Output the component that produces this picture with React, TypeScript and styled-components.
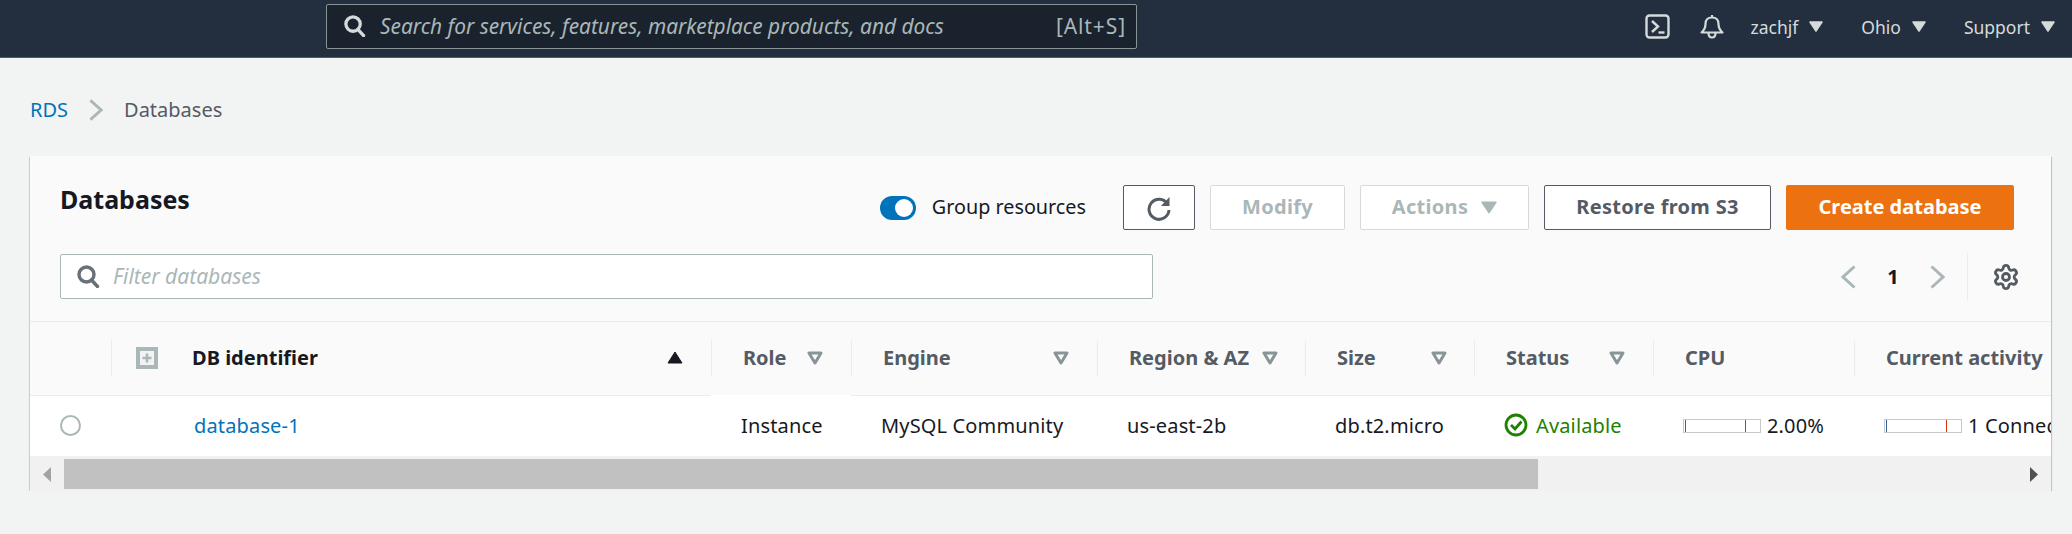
import styled, { createGlobalStyle } from "styled-components";
import { Settings } from "lucide-react";

const FONT = `"Noto Sans", "Open Sans", sans-serif`;
const COLUMNS = "81px 600px 140px 246px 208px 169px 179px 201px 400px";

const GlobalStyle = createGlobalStyle`
  html, body {
    margin: 0;
    background: #f2f3f3;
    font-family: ${FONT};
    overflow: hidden;
  }
`;

const Caret = ({ size = 14, color = "#d5dbdb" }: { size?: number; color?: string }) => (
  <svg width={size} height={size * 0.8} viewBox="0 0 14 11">
    <path d="M1 1 H13 L7 10 Z" fill={color} stroke={color} strokeWidth="1.5" strokeLinejoin="round" />
  </svg>
);

const FilterCaret = () => (
  <svg width="16" height="14" viewBox="0 0 16 14">
    <path d="M2 2 H14 L8 12 Z" fill="none" stroke="#879596" strokeWidth="3" strokeLinejoin="round" />
  </svg>
);

const SearchIcon = ({ color, size = 24 }: { color: string; size?: number }) => (
  <svg width={size} height={size} viewBox="0 0 24 24" fill="none" stroke={color} strokeWidth="3.4">
    <circle cx="10.5" cy="10.5" r="7.5" />
    <path d="M15.5 16 L21.5 22.5" strokeLinecap="round" />
  </svg>
);

const Chevron = ({ dir, color, w = 15, h = 24 }: { dir: "left" | "right"; color: string; w?: number; h?: number }) => (
  <svg width={w} height={h} viewBox="0 0 15 24" fill="none" stroke={color} strokeWidth="3" preserveAspectRatio="none">
    <path d={dir === "left" ? "M13.5 1.5 L2 12 L13.5 22.5" : "M1.5 1.5 L13 12 L1.5 22.5"} />
  </svg>
);

const columns = [
  { label: "Role", filter: true, width: 64 },
  { label: "Engine", filter: true, width: 170 },
  { label: "Region & AZ", filter: true, width: 133 },
  { label: "Size", filter: true, width: 94 },
  { label: "Status", filter: true, width: 103 },
  { label: "CPU", filter: false, width: 0 },
  { label: "Current activity", filter: false, width: 0 },
];

const App = () => {
  return (
    <>
      <GlobalStyle />
      <TopNav>
        <GlobalSearch>
          <SearchIcon color="#d5dbdb" size={23} />
          <SearchPlaceholder>Search for services, features, marketplace products, and docs</SearchPlaceholder>
          <Shortcut>[Alt+S]</Shortcut>
        </GlobalSearch>
        <NavRight>
          <svg width="25" height="25" viewBox="0 0 25 25" fill="none" stroke="#d5dbdb" strokeWidth="2.4">
            <rect x="1.5" y="1.5" width="22" height="22" rx="3" />
            <path d="M7 7 L13 12.5 L7 18" />
            <path d="M13.5 18.5 H19.5" />
          </svg>
          <BellWrap>
            <svg width="24" height="25" viewBox="0 0 24 25" fill="none" stroke="#d5dbdb" strokeWidth="2.2" strokeLinejoin="round">
              <path d="M12 1 V3.5" />
              <path d="M1.5 18.5 C5 15.5 5.5 13 5.5 10 C5.5 6 8 3.5 12 3.5 C16 3.5 18.5 6 18.5 10 C18.5 13 19 15.5 22.5 18.5 Z" />
              <path d="M8.5 19 C8.5 25 15.5 25 15.5 19" />
            </svg>
          </BellWrap>
          <NavMenu $left={27}>
            zachjf <Caret />
          </NavMenu>
          <NavMenu $left={38}>
            Ohio <Caret />
          </NavMenu>
          <NavMenu $left={38}>
            Support <Caret />
          </NavMenu>
        </NavRight>
      </TopNav>

      <Breadcrumbs>
        <CrumbLink>RDS</CrumbLink>
        <Chevron dir="right" color="#aab7b8" w={14} h={22} />
        <CrumbCurrent>Databases</CrumbCurrent>
      </Breadcrumbs>

      <Card>
        <CardHeader>
          <HeaderRow>
            <Title>Databases</Title>
            <Toolbar>
              <Toggle />
              <ToggleLabel>Group resources</ToggleLabel>
              <Button $width={72} $kind="normal" $icon>
                <svg width="26" height="26" viewBox="0 0 26 26" fill="none">
                  <path d="M21.5 9 A10 10 0 1 0 23 15" stroke="#545b64" strokeWidth="3" />
                  <path d="M23.5 2 V11 H15 Z" fill="#545b64" />
                </svg>
              </Button>
              <Button $width={135} $kind="disabled">Modify</Button>
              <Button $width={169} $kind="disabled">
                Actions
                <ButtonCaret>
                  <Caret size={16} color="#aab7b8" />
                </ButtonCaret>
              </Button>
              <Button $width={227} $kind="normal">Restore from S3</Button>
              <Button $width={228} $kind="primary">Create database</Button>
            </Toolbar>
          </HeaderRow>
          <FilterRow>
            <FilterBox>
              <SearchIcon color="#687078" size={24} />
              <FilterPlaceholder>Filter databases</FilterPlaceholder>
            </FilterBox>
            <Pager>
              <Chevron dir="left" color="#aab7b8" />
              <PageNumber>1</PageNumber>
              <Chevron dir="right" color="#aab7b8" />
              <PagerDivider />
              <Settings size={28} color="#545b64" strokeWidth={2.4} />
            </Pager>
          </FilterRow>
        </CardHeader>

        <TableClip>
          <HeadRow>
            <HeadCell />
            <HeadCell $divider>
              <ExpandAll>
                <svg width="22" height="22" viewBox="0 0 22 22">
                  <rect x="2" y="2" width="18" height="18" fill="#f2f3f3" stroke="#aab7b8" strokeWidth="4" />
                  <path d="M11 6.5 V15.5 M6.5 11 H15.5" stroke="#aab7b8" strokeWidth="2.6" />
                </svg>
              </ExpandAll>
              <HeadLabel $strong>DB identifier</HeadLabel>
              <SortArrow>
                <svg width="16" height="13" viewBox="0 0 16 13">
                  <path d="M8 1 L15 12 H1 Z" fill="#16191f" stroke="#16191f" strokeLinejoin="round" />
                </svg>
              </SortArrow>
            </HeadCell>
            {columns.map((c) => (
              <HeadCell $divider key={c.label}>
                <HeadLabel $width={c.width}>{c.label}</HeadLabel>
                {c.filter && <FilterCaret />}
              </HeadCell>
            ))}
          </HeadRow>
          <BodyRow>
            <BodyCell>
              <Radio />
            </BodyCell>
            <BodyCell>
              <DbLink>database-1</DbLink>
            </BodyCell>
            <BodyCell $overlap>Instance</BodyCell>
            <BodyCell>MySQL Community</BodyCell>
            <BodyCell>us-east-2b</BodyCell>
            <BodyCell>db.t2.micro</BodyCell>
            <BodyCell>
              <StatusOk>
                <svg width="24" height="24" viewBox="0 0 24 24" fill="none" stroke="#1d8102" strokeWidth="2.8">
                  <circle cx="12" cy="12" r="10" />
                  <path d="M7 12 L11 16 L17.5 8.5" />
                </svg>
                Available
              </StatusOk>
            </BodyCell>
            <BodyCell>
              <Meter />
              2.00%
            </BodyCell>
            <BodyCell>
              <Meter />1 Connections
            </BodyCell>
          </BodyRow>
        </TableClip>

        <ScrollBar>
          <ScrollButton>
            <svg width="10" height="15" viewBox="0 0 10 15">
              <path d="M9 0 V15 L1 7.5 Z" fill="#a3a3a3" />
            </svg>
          </ScrollButton>
          <ScrollThumb />
          <ScrollEnd>
            <svg width="10" height="15" viewBox="0 0 10 15">
              <path d="M1 0 V15 L9 7.5 Z" fill="#505050" />
            </svg>
          </ScrollEnd>
        </ScrollBar>
      </Card>
    </>
  );
};

export default App;

const TopNav = styled.div`
  display: flex;
  align-items: flex-start;
  box-sizing: content-box;
  height: 53px;
  padding: 4px 17px 0 326px;
  background: #232f3e;
  border-bottom: 1px solid #545b64;
`;

const GlobalSearch = styled.div`
  display: flex;
  align-items: center;
  box-sizing: border-box;
  width: 811px;
  height: 45px;
  padding: 0 10px 2px 16px;
  background: #1a222d;
  border: 1px solid #879596;
  border-radius: 2px;
`;

const SearchPlaceholder = styled.span`
  margin-left: 14px;
  font-size: 20.85px;
  font-style: italic;
  color: #aab7b8;
`;

const Shortcut = styled.span`
  margin-left: auto;
  font-size: 21px;
  letter-spacing: 0.9px;
  color: #aab7b8;
`;

const NavRight = styled.div`
  display: flex;
  align-items: center;
  height: 45px;
  margin-left: auto;
`;

const BellWrap = styled.div`
  display: flex;
  margin-left: 30px;
`;

const NavMenu = styled.div<{ $left: number }>`
  display: flex;
  align-items: center;
  gap: 11px;
  margin-left: ${(p) => p.$left}px;
  font-size: 17.5px;
  color: #d5dbdb;
`;

const Breadcrumbs = styled.div`
  display: flex;
  align-items: center;
  height: 98px;
  padding: 5px 0 0 30px;
  font-size: 20px;
  box-sizing: border-box;
`;

const CrumbLink = styled.a`
  margin-right: 21px;
  color: #0073bb;
`;

const CrumbCurrent = styled.span`
  margin-left: 21px;
  color: #545b64;
`;

const Card = styled.div`
  width: 2021px;
  margin-left: 30px;
  background: #fafafa;
  box-shadow: 0 1px 1px 0 rgba(0, 28, 36, 0.4), 1px 1px 1px 0 rgba(0, 28, 36, 0.15),
    -1px 1px 1px 0 rgba(0, 28, 36, 0.1);
`;

const CardHeader = styled.div`
  box-sizing: border-box;
  height: 166px;
  padding: 29px 31px 0 30px;
  border-bottom: 1px solid #eaeded;
`;

const HeaderRow = styled.div`
  display: flex;
  align-items: flex-start;
  justify-content: space-between;
`;

const Title = styled.h2`
  margin: -1px 0 0;
  font-size: 25px;
  line-height: 30px;
  font-weight: 700;
  color: #16191f;
`;

const Toolbar = styled.div`
  display: flex;
  align-items: center;
  gap: 15px;
  margin-right: 6px;
`;

const Toggle = styled.span`
  position: relative;
  width: 36px;
  height: 24px;
  border-radius: 12px;
  background: #0073bb;
  &::after {
    content: "";
    position: absolute;
    top: 3px;
    right: 3px;
    width: 18px;
    height: 18px;
    border-radius: 50%;
    background: #fff;
  }
`;

const ToggleLabel = styled.span`
  margin-left: 1px;
  margin-right: 22px;
  padding-bottom: 2px;
  font-size: 19.8px;
  color: #16191f;
`;

const buttonTheme = {
  normal: "color: #545b64; background: #fff; border-color: #545b64; letter-spacing: 0.3px;",
  disabled: "color: #aab7b8; background: #fff; border-color: #d5dbdb; letter-spacing: 0.3px;",
  primary: "color: #fff; background: #ec7211; border-color: #ec7211;",
};

const Button = styled.button<{ $width: number; $kind: keyof typeof buttonTheme; $icon?: boolean }>`
  display: flex;
  align-items: center;
  justify-content: center;
  gap: 13px;
  box-sizing: border-box;
  width: ${(p) => p.$width}px;
  height: 45px;
  padding: 0 0 ${(p) => (p.$icon ? 0 : 2)}px;
  border: 1px solid;
  border-radius: 2px;
  font-family: ${FONT};
  font-size: 20px;
  font-weight: 700;
  ${(p) => buttonTheme[p.$kind]}
`;

const ButtonCaret = styled.span`
  display: flex;
  margin-top: 2px;
`;

const FilterRow = styled.div`
  display: flex;
  align-items: center;
  margin-top: 23px;
`;

const FilterBox = styled.div`
  display: flex;
  align-items: center;
  box-sizing: border-box;
  width: 1093px;
  height: 45px;
  padding: 0 0 2px 15px;
  background: #fff;
  border: 1px solid #aab7b8;
  border-radius: 2px;
`;

const FilterPlaceholder = styled.span`
  margin-left: 13px;
  font-size: 21px;
  font-style: italic;
  color: #aab7b8;
`;

const Pager = styled.div`
  display: flex;
  align-items: center;
  margin-left: auto;
`;

const PageNumber = styled.span`
  width: 74px;
  text-align: center;
  font-size: 20px;
  font-weight: 700;
  color: #16191f;
`;

const PagerDivider = styled.span`
  width: 1px;
  height: 47px;
  margin: 0 24px 0 22px;
  background: #eaeded;
`;

const TableClip = styled.div`
  overflow: hidden;
`;

const HeadRow = styled.div`
  display: grid;
  grid-template-columns: ${COLUMNS};
  width: max-content;
  height: 73px;
  border-bottom: 1px solid #eaeded;
  box-sizing: content-box;
`;

const HeadCell = styled.div<{ $divider?: boolean }>`
  position: relative;
  display: flex;
  align-items: center;
  padding: 0 0 2px 32px;
  &::before {
    content: ${(p) => (p.$divider ? '""' : "none")};
    position: absolute;
    left: 0;
    top: 18px;
    height: 36px;
    width: 1px;
    background: #eaeded;
  }
`;

const ExpandAll = styled.span`
  display: flex;
  margin-left: -7px;
  margin-right: 34px;
`;

const HeadLabel = styled.span<{ $strong?: boolean; $width?: number }>`
  ${(p) => (p.$width ? `width: ${p.$width}px;` : "")}
  font-size: 20px;
  font-weight: 700;
  white-space: nowrap;
  color: ${(p) => (p.$strong ? "#16191f" : "#545b64")};
`;

const SortArrow = styled.span`
  position: absolute;
  right: 28px;
  top: 29px;
  display: flex;
`;

const BodyRow = styled.div`
  display: grid;
  grid-template-columns: ${COLUMNS};
  width: max-content;
  height: 60px;
  background: #fff;
`;

const BodyCell = styled.div<{ $overlap?: boolean }>`
  display: flex;
  align-items: center;
  padding: 0 0 2px 30px;
  font-size: 20px;
  letter-spacing: 0.15px;
  white-space: nowrap;
  color: #16191f;
  ${(p) => (p.$overlap ? "box-shadow: 0 -1px 0 #fff;" : "")}
`;

const Radio = styled.span`
  box-sizing: border-box;
  width: 21px;
  height: 21px;
  border: 2px solid #aab7b8;
  border-radius: 50%;
  background: #fff;
`;

const DbLink = styled.a`
  margin-left: 53px;
  color: #0073bb;
`;

const StatusOk = styled.span`
  display: flex;
  align-items: center;
  gap: 8px;
  color: #1d8102;
`;

const Meter = styled.span`
  position: relative;
  box-sizing: border-box;
  flex: none;
  width: 78px;
  height: 14px;
  margin: 2px 6px 0 0;
  background: #fff;
  border: 1px solid #c5c9cc;
  &::before,
  &::after {
    content: "";
    position: absolute;
    top: 0;
    bottom: 0;
    width: 1px;
  }
  &::before {
    left: 1px;
    background: #3b5f8f;
  }
  &::after {
    left: 61px;
    background: #d13212;
  }
`;

const ScrollBar = styled.div`
  display: flex;
  box-sizing: border-box;
  height: 35px;
  padding: 3px 0 2px;
  background: #f1f1f1;
`;

const ScrollButton = styled.div`
  display: flex;
  align-items: center;
  justify-content: center;
  width: 34px;
  padding-right: 1px;
  box-sizing: border-box;
`;

const ScrollThumb = styled.div`
  width: 1474px;
  background: #c1c1c1;
`;

const ScrollEnd = styled.div`
  display: flex;
  align-items: center;
  justify-content: flex-end;
  flex: 1;
  padding-right: 12px;
`;
